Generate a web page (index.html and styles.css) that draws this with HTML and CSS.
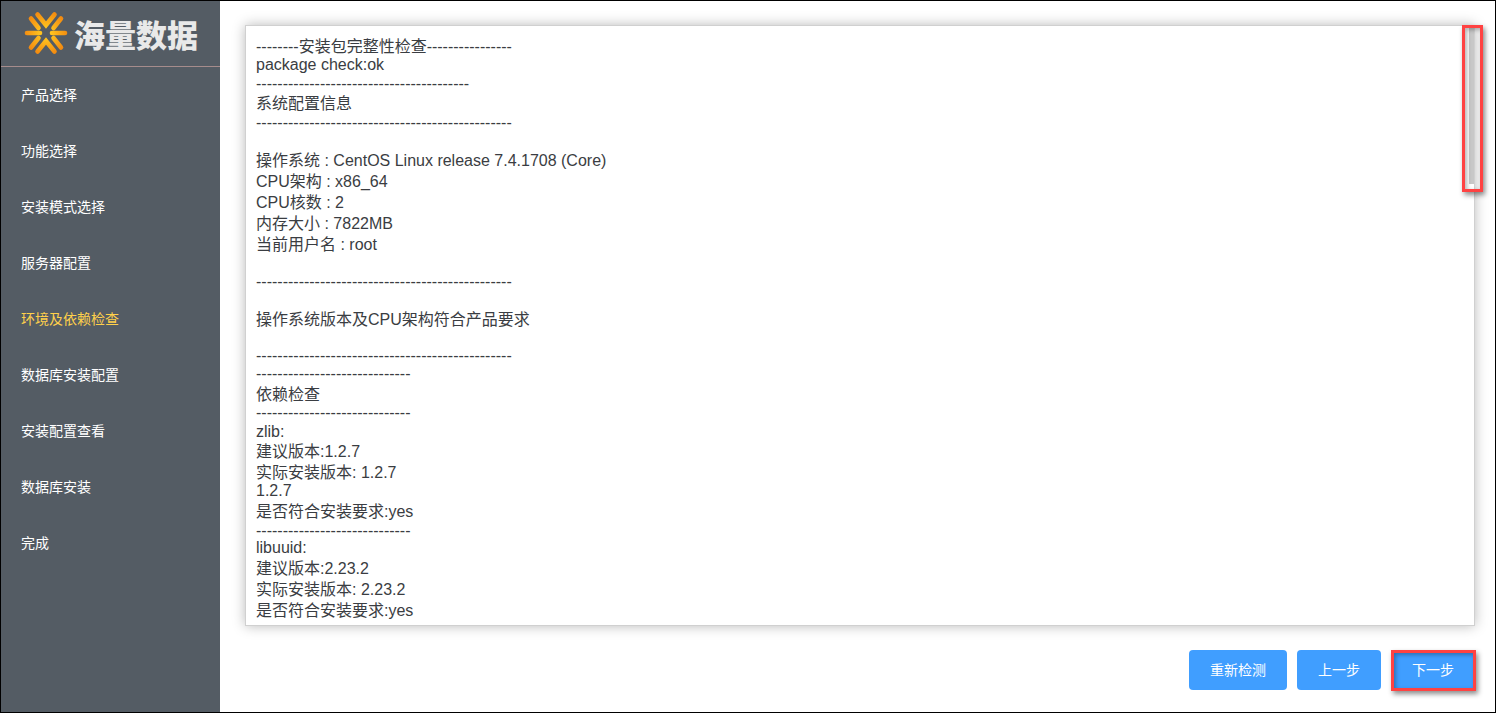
FILE: index.html
```
<!DOCTYPE html>
<html lang="zh-CN">
<head>
<meta charset="utf-8">
<title>海量数据 安装向导</title>
<link rel="stylesheet" href="styles.css">
</head>
<body>
<div class="app">
  <aside class="sidebar">
    <div class="brand">
      <svg class="brand-mark" width="46" height="46" viewBox="0 0 46 46" aria-hidden="true">
        <defs>
          <radialGradient id="burst" gradientUnits="userSpaceOnUse" cx="23" cy="23" r="22">
            <stop offset="0.25" stop-color="#ffc31f"/>
            <stop offset="1" stop-color="#f28a10"/>
          </radialGradient>
        </defs>
        <g fill="none" stroke="url(#burst)" stroke-width="4.6" stroke-linecap="round" stroke-linejoin="miter">
          <path d="M14.5 4.5 L23 15 L31.5 4.5"/>
          <path d="M14.5 41.5 L23 31 L31.5 41.5"/>
          <path d="M4 23 H17"/>
          <path d="M29 23 H42"/>
          <path d="M8 8.5 L15.5 18"/>
          <path d="M38 8.5 L30.5 18"/>
          <path d="M8 37.5 L15.5 28"/>
          <path d="M38 37.5 L30.5 28"/>
        </g>
      </svg>
      <span class="brand-name">海量数据</span>
    </div>
    <nav class="menu">
      <a class="menu-item">产品选择</a>
      <a class="menu-item">功能选择</a>
      <a class="menu-item">安装模式选择</a>
      <a class="menu-item">服务器配置</a>
      <a class="menu-item is-active">环境及依赖检查</a>
      <a class="menu-item">数据库安装配置</a>
      <a class="menu-item">安装配置查看</a>
      <a class="menu-item">数据库安装</a>
      <a class="menu-item">完成</a>
    </nav>
  </aside>
  <main class="main">
    <section class="panel">
      <div class="log">
        <div class="h18">--------安装包完整性检查----------------</div>
        <div class="h19">package check:ok</div>
        <div class="h20">----------------------------------------</div>
        <div class="h19">系统配置信息</div>
        <div class="h19">------------------------------------------------</div>
        <div class="h19"></div>
        <div class="h21">操作系统 : CentOS Linux release 7.4.1708 (Core)</div>
        <div class="h21">CPU架构 : x86_64</div>
        <div class="h21">CPU核数 : 2</div>
        <div class="h21">内存大小 : 7822MB</div>
        <div class="h18">当前用户名 : root</div>
        <div class="h19"></div>
        <div class="h19">------------------------------------------------</div>
        <div class="h19"></div>
        <div class="h17">操作系统版本及CPU架构符合产品要求</div>
        <div class="h19"></div>
        <div class="h18">------------------------------------------------</div>
        <div class="h21">-----------------------------</div>
        <div class="h18">依赖检查</div>
        <div class="h19">-----------------------------</div>
        <div class="h20">zlib:</div>
        <div class="h21">建议版本:1.2.7</div>
        <div class="h18">实际安装版本: 1.2.7</div>
        <div class="h21">1.2.7</div>
        <div class="h19">是否符合安装要求:yes</div>
        <div class="h17">-----------------------------</div>
        <div class="h21">libuuid:</div>
        <div class="h21">建议版本:2.23.2</div>
        <div class="h21">实际安装版本: 2.23.2</div>
        <div class="h19">是否符合安装要求:yes</div>
      </div>
      <div class="scrollbar"><div class="scrollbar-thumb"></div></div>
      <div class="mark mark-scroll"></div>
    </section>
    <div class="actions">
      <button class="btn">重新检测</button>
      <button class="btn">上一步</button>
      <button class="btn btn-marked">下一步<span class="mark mark-btn"></span></button>
    </div>
  </main>
</div>
</body>
</html>
```
FILE: styles.css
```
* { box-sizing: border-box; }
html, body { margin: 0; height: 100%; background: #fff; }
body {
  font-family: "Liberation Sans", "Noto Sans CJK SC", sans-serif;
  overflow: hidden;
}
.app {
  display: flex;
  width: 1496px;
  height: 713px;
  border: 1px solid #000;
  overflow: hidden;
}
.sidebar {
  flex: none;
  width: 219px;
  background: #545c64;
  display: flex;
  flex-direction: column;
}
.brand {
  flex: none;
  height: 66px;
  border-bottom: 1px solid #a68c8c;
  display: flex;
  align-items: center;
  padding-left: 22px;
  gap: 5px;
}
.brand-mark { flex: none; margin-bottom: 1px; }
.brand-name {
  font-family: "Noto Sans CJK SC", sans-serif;
  font-weight: 900;
  font-size: 31px;
  line-height: 40px;
  color: #e9e9e9;
  white-space: nowrap;
}
.menu { display: flex; flex-direction: column; }
.menu-item {
  height: 56px;
  line-height: 56px;
  padding-left: 20px;
  font-size: 14px;
  color: #fff;
}
.menu-item.is-active { color: #ffd04b; }
.main {
  flex: 1;
  min-width: 0;
  padding: 24px 20px 0 25px;
  display: flex;
  flex-direction: column;
}
.panel {
  position: relative;
  flex: none;
  height: 601px;
  border: 1px solid #d0d0d0;
  background: #fff;
  box-shadow: 0 0 12px rgba(0, 0, 0, 0.28);
  overflow: visible;
}
.log {
  padding: 11px 10px 0;
  height: 599px;
  overflow: hidden;
  font-size: 16px;
  color: #3a3d42;
}
.log > div { line-height: 20px; white-space: pre; }
.h17 { height: 17px; }
.h18 { height: 18px; }
.h19 { height: 19px; }
.h20 { height: 20px; }
.h21 { height: 21px; }
.scrollbar {
  position: absolute;
  top: 0;
  right: 0;
  bottom: 0;
  width: 5px;
  background: #fff;
}
.scrollbar-thumb {
  height: 158px;
  background: #c8c8c8;
}
.mark {
  position: absolute;
  border: 3px solid #ff4242;
  pointer-events: none;
  box-shadow: 2px 3px 5px rgba(0, 0, 0, 0.45), inset 2px 2px 4px rgba(0, 0, 0, 0.3);
}
.mark-scroll {
  top: -1px;
  right: -9px;
  width: 21px;
  height: 167px;
}
.actions {
  display: flex;
  justify-content: flex-end;
  gap: 10px;
  margin-top: 24px;
}
.btn {
  position: relative;
  height: 40px;
  padding: 0 21px;
  border: 0;
  border-radius: 4px;
  background: #409eff;
  color: #fff;
  font: inherit;
  font-size: 14px;
  line-height: 40px;
}
.btn-marked { border-radius: 0; }
.mark-btn {
  top: 0;
  left: 0;
  right: -1px;
  bottom: -1px;
}
```
